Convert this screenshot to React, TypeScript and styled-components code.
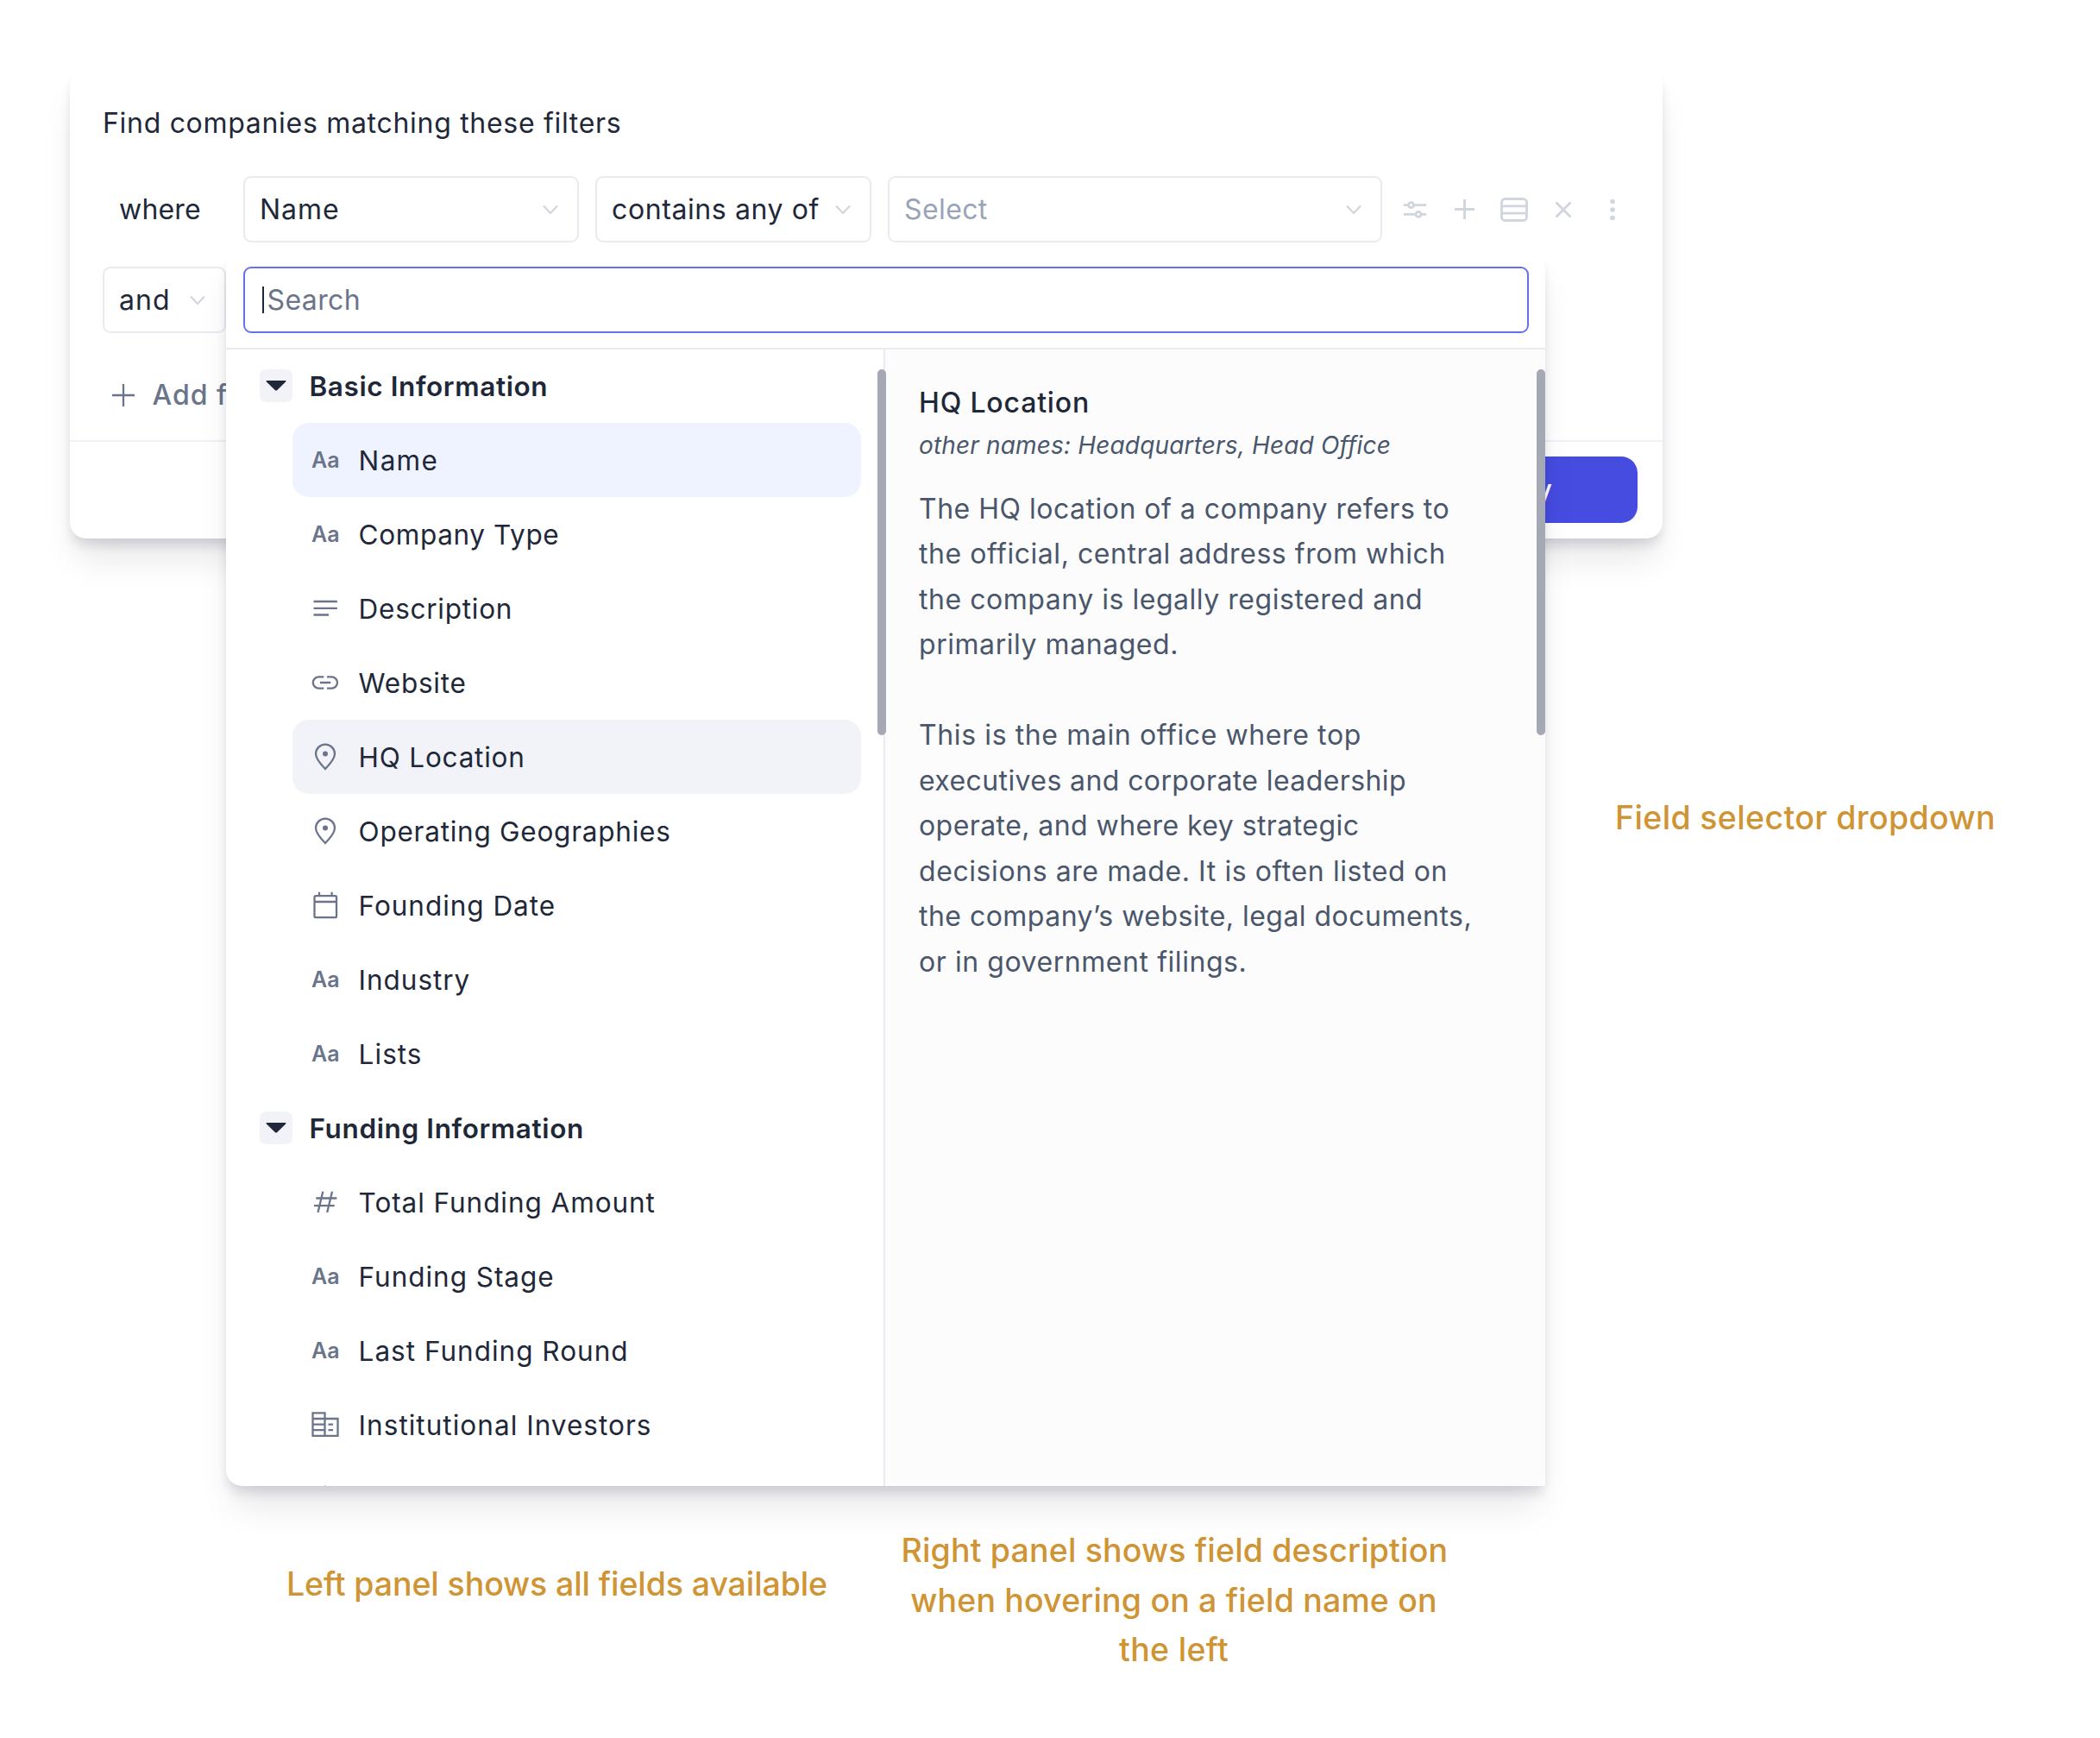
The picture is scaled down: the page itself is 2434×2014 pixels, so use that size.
import React from "react";
import styled, { createGlobalStyle, css } from "styled-components";

const ink = "#1f2839";
const slate = "#4a566b";
const muted = "#6a748a";
const faint = "#d0d5de";
const line = "#eaebf0";
const amber = "#cf9433";

const GlobalStyle = createGlobalStyle`
  * { box-sizing: border-box; }
  body { margin: 0; background: #fff; }
  p, h2, h3 { margin: 0; font: inherit; }
`;

const Page = styled.main`
  width: 2434px;
  height: 2014px;
  padding: 80px 0 0 81px;
  display: flex;
  flex-direction: column;
  align-items: flex-start;
  overflow: hidden;
  background: #fff;
  color: ${ink};
  font-family: Inter, "Liberation Sans", sans-serif;
  font-size: 32px;
`;

const raised = css`
  box-shadow:
    0 30px 40px -8px rgba(16, 24, 40, 0.1),
    0 10px 14px -3px rgba(16, 24, 40, 0.14);
`;

const Card = styled.section`
  position: relative;
  width: 1846px;
  height: 544px;
  display: flex;
  flex-direction: column;
  border-radius: 19px;
  background: #fff;
  ${raised}
`;

const CardBody = styled.div`
  flex: 1;
  padding: 44px 38px 0;
  display: flex;
  flex-direction: column;
`;

const Label = styled.span<{ $track?: number }>`
  white-space: nowrap;
  letter-spacing: ${(p) => p.$track ?? 0}px;
`;

const Title = styled.h2`
  height: 38px;
  line-height: 38px;
  margin: 0 0 42px;
`;

const FilterRow = styled.div`
  display: flex;
  align-items: center;
  height: 77px;
  margin-bottom: 28px;
`;

const Where = styled.div`
  flex: none;
  width: 163px;
  padding-left: 19px;
`;

const Select = styled.div<{ $w: number; $muted?: boolean }>`
  flex: none;
  width: ${(p) => p.$w}px;
  height: 77px;
  margin-right: 19px;
  padding: 0 22.5px 0 17px;
  display: flex;
  align-items: center;
  justify-content: space-between;
  border: 2.4px solid ${line};
  border-radius: 9px;
  background: #fff;
  color: ${(p) => (p.$muted ? "#9aa3b7" : ink)};
`;

const RowTools = styled.div`
  flex: none;
  display: flex;
  align-items: center;
  margin-left: -9.5px;
  color: ${faint};
`;

const Tool = styled.span`
  width: 57.3px;
  height: 40px;
  display: grid;
  place-items: center;
`;

const AddFilter = styled.div`
  display: flex;
  align-items: center;
  gap: 20.5px;
  height: 64px;
  margin-top: 11.5px;
  padding-left: 11px;
  font-weight: 500;
  color: ${muted};
`;

const CardFooter = styled.footer`
  flex: none;
  height: 114px;
  padding: 17px 29px 0 0;
  display: flex;
  justify-content: flex-end;
  border-top: 2px solid #f1f2f7;
`;

const ApplyButton = styled.button`
  width: 287px;
  height: 77px;
  padding: 0;
  border: 0;
  border-radius: 19px;
  background: #464ce0;
  color: #fff;
  font: 500 32px Inter, sans-serif;
`;

const Dropdown = styled.div`
  position: absolute;
  left: 181px;
  top: 210px;
  width: 1529px;
  height: 1432px;
  display: flex;
  flex-direction: column;
  border-radius: 19px 19px 0 19px;
  background: #fff;
  ${raised}
`;

const SearchArea = styled.div`
  flex: none;
  height: 114.5px;
  padding: 19px 19px 0 20px;
  border-bottom: 2.4px solid ${line};
`;

const SearchBox = styled.div`
  height: 77px;
  padding-left: 20px;
  display: flex;
  align-items: center;
  gap: 3.5px;
  border: 2.4px solid #6570ee;
  border-radius: 9px;
  color: ${muted};
`;

const Caret = styled.i`
  width: 2px;
  height: 31px;
  background: ${ink};
`;

const Panels = styled.div`
  position: relative;
  flex: 1;
  min-height: 0;
  display: flex;
`;

const FieldPanel = styled.div`
  flex: none;
  width: 764px;
  overflow: hidden;
  border-right: 2px solid ${line};
  border-bottom-left-radius: 19px;
  font-size: 31.5px;
`;

const InfoPanel = styled.div`
  flex: 1;
  padding: 36.5px 40px 0 39px;
  background: #fcfcfc;
`;

/* Overlays the panels; the list's bar straddles the divider. */
const Scrollbar = styled.i<{ $left: number }>`
  position: absolute;
  top: 23px;
  left: ${(p) => p.$left}px;
  width: 10px;
  height: 424px;
  border-radius: 5px;
  background: #a4a9b5;
`;

const GroupHeader = styled.div`
  height: 85.97px;
  padding-left: 38.5px;
  display: flex;
  align-items: center;
  gap: 20px;
  font-weight: 600;
`;

const Toggle = styled.span`
  width: 38px;
  height: 38px;
  display: grid;
  place-items: center;
  border-radius: 7px;
  background: #f2f3f8;
`;

const FieldRow = styled.div<{ $tone?: "active" | "hover" }>`
  height: 85.97px;
  margin: 0 26.5px 0 77px;
  padding-left: 22px;
  display: flex;
  align-items: center;
  gap: 22.6px;
  border-radius: 19px;
  background: ${(p) => (p.$tone === "active" ? "#eff3ff" : p.$tone === "hover" ? "#f2f3f8" : "transparent")};
`;

const IconSlot = styled.span`
  width: 32px;
  height: 32px;
  display: grid;
  place-items: center;
  flex: none;
  color: ${muted};
  font-size: 25px;
  font-weight: 600;
  line-height: 32px;
`;

const InfoTitle = styled.h3`
  font-weight: 500;
  line-height: 52px;
`;

const AltNames = styled.p`
  font-size: 28px;
  font-style: italic;
  line-height: 47px;
  color: ${slate};
`;

const Copy = styled.p`
  margin-top: 23.5px;
  line-height: 52.5px;
  color: ${slate};
  & + & {
    margin-top: 52.5px;
  }
  ${Label} {
    display: block;
  }
`;

const Note = styled.p`
  font-size: 37.5px;
  font-weight: 500;
  line-height: 57.5px;
  text-align: center;
  color: ${amber};
  ${Label} {
    display: block;
  }
`;

const SideNote = styled(Note)`
  margin: 295px 0 0 1791px;
`;

const BottomNotes = styled.div`
  margin-top: 791.5px;
  display: flex;
  align-items: flex-start;
  gap: 83px;
`;

const LeftNote = styled(Note)`
  width: 632px;
  margin: 38.5px 0 0 248.5px;
`;

const RightNote = styled(Note)`
  width: 632px;
`;

const Chevron = () => (
  <svg width="18" height="12" viewBox="0 0 18 12" fill="none" stroke={faint} strokeWidth="2.2">
    <path d="M1 1.5 9 10l8-8.500" />
  </svg>
);

const Plus = ({ size, weight }: { size: number; weight: number }) => (
  <svg width={size} height={size} viewBox="0 0 26 26" fill="none" stroke="currentColor" strokeWidth={weight}>
    <path d="M13 0v26M0 13h26" />
  </svg>
);

const glyph = {
  width: 32,
  height: 32,
  viewBox: "0 0 32 32",
  fill: "none",
  stroke: "currentColor",
  strokeWidth: 2.3,
};

const icons: Record<string, React.ReactNode> = {
  text: <>Aa</>,
  lines: (
    <svg {...glyph}>
      <path d="M2.5 8h27.3M2.5 15.8h27.3M2.5 23.5h17.5" />
    </svg>
  ),
  link: (
    <svg {...glyph}>
      <path d="M14.3 9.4H8.4a6.6 6.6 0 0 0 0 13.2h5.9M18 9.4h5.4a6.6 6.6 0 0 1 0 13.2H18M10 16h12.3" />
    </svg>
  ),
  pin: (
    <svg {...glyph}>
      <path d="M16 30C10 24 5 18.5 5 12.6a11 11 0 0 1 22 0C27 18.5 22 24 16 30Z" />
      <circle cx="16" cy="12.6" r="3" fill="currentColor" stroke="none" />
    </svg>
  ),
  calendar: (
    <svg {...glyph}>
      <rect x="3.5" y="5.2" width="25.5" height="25" rx="1.5" />
      <path d="M3.5 12H29M9 .7v4.500M23.6 .7v4.500" />
    </svg>
  ),
  hash: (
    <svg {...glyph}>
      <path d="M13.3 3.700 7.500 28M24 3.700 18.2 28M5.3 11.500h24M3 20.200h23.700" />
    </svg>
  ),
  building: (
    <svg {...glyph}>
      <path d="M1.5 2.3h14v26.500h-14zM15.500 9h15v19.800h-15M1.500 9h14M1.500 15.600h14M1.500 22.200h14M19.500 15.600h5.500M19.500 22.200h5.500" />
    </svg>
  ),
  marker: (
    <svg {...glyph}>
      <path d="M16 1.800 5 13l11 17 11-17Z" />
    </svg>
  ),
};

type Field = { icon: string; label: string; track?: number; tone?: "active" | "hover" };

const groups: { title: string; track: number; fields: Field[] }[] = [
  {
    title: "Basic Information",
    track: 0.6,
    fields: [
      { icon: "text", label: "Name", track: 1.3, tone: "active" },
      { icon: "text", label: "Company Type", track: 0.63 },
      { icon: "lines", label: "Description", track: 0.74 },
      { icon: "link", label: "Website", track: 0.74 },
      { icon: "pin", label: "HQ Location", track: 0.78, tone: "hover" },
      { icon: "pin", label: "Operating Geographies", track: 0.75 },
      { icon: "calendar", label: "Founding Date", track: 0.96 },
      { icon: "text", label: "Industry", track: 0.96 },
      { icon: "text", label: "Lists", track: 1.05 },
    ],
  },
  {
    title: "Funding Information",
    track: 0.62,
    fields: [
      { icon: "hash", label: "Total Funding Amount", track: 0.93 },
      { icon: "text", label: "Funding Stage", track: 0.96 },
      { icon: "text", label: "Last Funding Round", track: 1 },
      { icon: "building", label: "Institutional Investors", track: 1.03 },
      { icon: "marker", label: "" },
    ],
  },
];

const description: [string, number][][] = [
  [
    ["The HQ location of a company refers to", 0.5],
    ["the official, central address from which", 0.54],
    ["the company is legally registered and", 0.53],
    ["primarily managed.", 0.55],
  ],
  [
    ["This is the main office where top", 0.61],
    ["executives and corporate leadership", 0.4],
    ["operate, and where key strategic", 0.43],
    ["decisions are made. It is often listed on", 0.58],
    ["the company’s website, legal documents,", 0.47],
    ["or in government filings.", 0.56],
  ],
];

export default function App() {
  return (
    <>
      <GlobalStyle />
      <Page>
        <Card>
          <CardBody>
            <Title>
              <Label $track={0.7}>Find companies matching these filters</Label>
            </Title>
            <FilterRow>
              <Where>
                <Label $track={0.2}>where</Label>
              </Where>
              <Select $w={389}>
                <Label $track={1}>Name</Label>
                <Chevron />
              </Select>
              <Select $w={320}>
                <Label $track={0.6}>contains any of</Label>
                <Chevron />
              </Select>
              <Select $w={573} $muted>
                <Label $track={0.4}>Select</Label>
                <Chevron />
              </Select>
              <RowTools>
                <Tool>
                  <svg width="26" height="20" viewBox="0 0 26 20" fill="none" stroke="currentColor" strokeWidth="2.8">
                    <path d="M0 4.600h5.500M11.500 4.600H26M0 15.400h14M20 15.400h6" />
                    <circle cx="8.500" cy="4.600" r="3" />
                    <circle cx="17" cy="15.400" r="3" />
                  </svg>
                </Tool>
                <Tool>
                  <Plus size={23} weight={3.3} />
                </Tool>
                <Tool>
                  <svg width="32" height="28" viewBox="0 0 32 28" fill="none" stroke="currentColor" strokeWidth="2.8">
                    <rect x="1.5" y="1.5" width="29" height="25" rx="4" />
                    <path d="M1.5 9.800h29M1.500 18.200h29" />
                  </svg>
                </Tool>
                <Tool>
                  <svg width="20" height="20" viewBox="0 0 20 20" fill="none" stroke="currentColor" strokeWidth="3">
                    <path d="m1.500 1.500 17 17M18.500 1.500l-17 17" />
                  </svg>
                </Tool>
                <Tool>
                  <svg width="8" height="26" viewBox="0 0 8 26" fill="currentColor">
                    <circle cx="4" cy="3.500" r="2.800" />
                    <circle cx="4" cy="13" r="2.800" />
                    <circle cx="4" cy="22.500" r="2.800" />
                  </svg>
                </Tool>
              </RowTools>
            </FilterRow>
            <FilterRow>
              <Select $w={143}>
                <Label $track={1}>and</Label>
                <Chevron />
              </Select>
            </FilterRow>
            <AddFilter>
              <Plus size={26} weight={2.3} />
              <Label $track={1}>Add filter</Label>
            </AddFilter>
          </CardBody>
          <CardFooter>
            <ApplyButton>
              <Label>Apply</Label>
            </ApplyButton>
          </CardFooter>

          <Dropdown>
            <SearchArea>
              <SearchBox>
                <Caret />
                <Label $track={0.4}>Search</Label>
              </SearchBox>
            </SearchArea>
            <Panels>
              <FieldPanel>
                {groups.map((group) => (
                  <div key={group.title}>
                    <GroupHeader>
                      <Toggle>
                        <svg width="24" height="12" viewBox="0 0 24 12" fill={ink}>
                          <path d="M.7 0h22.600v1.300L12.800 11.500h-1.600L.7 1.300z" />
                        </svg>
                      </Toggle>
                      <Label $track={group.track}>{group.title}</Label>
                    </GroupHeader>
                    {group.fields.map((field) => (
                      <FieldRow key={field.label} $tone={field.tone}>
                        <IconSlot>{icons[field.icon]}</IconSlot>
                        <Label $track={field.track}>{field.label}</Label>
                      </FieldRow>
                    ))}
                  </div>
                ))}
              </FieldPanel>
              <InfoPanel>
                <InfoTitle>
                  <Label $track={0.83}>HQ Location</Label>
                </InfoTitle>
                <AltNames>
                  <Label $track={0.16}>other names: Headquarters, Head Office</Label>
                </AltNames>
                {description.map((paragraph, i) => (
                  <Copy key={i}>
                    {paragraph.map(([text, track]) => (
                      <Label key={text} $track={track}>
                        {text}
                      </Label>
                    ))}
                  </Copy>
                ))}
              </InfoPanel>
              <Scrollbar $left={755} />
              <Scrollbar $left={1519} />
            </Panels>
          </Dropdown>
        </Card>
        <SideNote>
          <Label $track={0.35}>Field selector dropdown</Label>
        </SideNote>
        <BottomNotes>
          <LeftNote>
            <Label $track={-0.1}>Left panel shows all fields available</Label>
          </LeftNote>
          <RightNote>
            <Label $track={0.17}>Right panel shows field description</Label>
            <Label $track={0.17}>when hovering on a field name on</Label>
            <Label $track={0.3}>the left</Label>
          </RightNote>
        </BottomNotes>
      </Page>
    </>
  );
}
